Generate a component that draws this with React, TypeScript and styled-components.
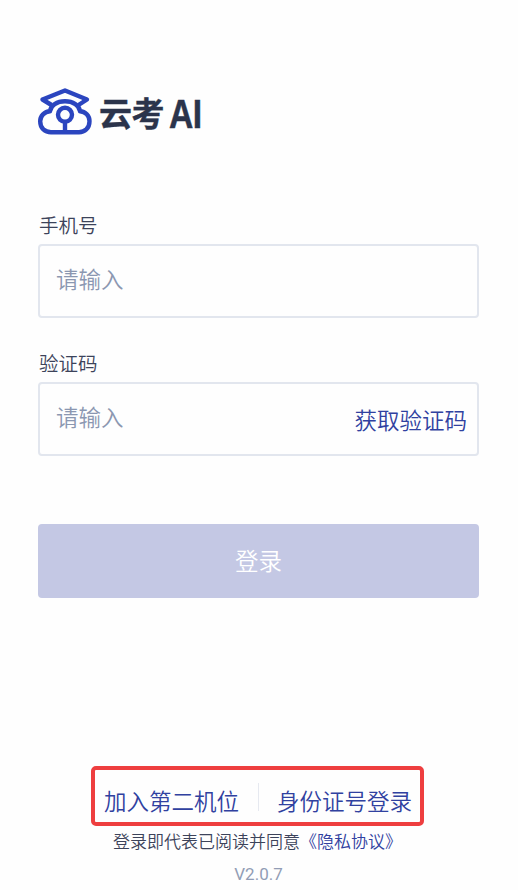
import React from "react";
import styled, { createGlobalStyle } from "styled-components";

const GlobalStyle = createGlobalStyle`
  * { box-sizing: border-box; }
  body { margin: 0; background: #fefefe; }
  button, input { font: inherit; }
`;

const Page = styled.main`
  width: 518px;
  height: 890px;
  padding: 87px 39px 0 38px;
  display: flex;
  flex-direction: column;
  overflow: hidden;
  background: #fefefe;
  color: #3c435a;
  font-family: Roboto, "Noto Sans CJK SC", sans-serif;
  font-weight: 350;
`;

const Brand = styled.header`
  display: flex;
  align-items: center;
  height: 50px;
  margin-bottom: 75px;
  color: #2b344b;
  white-space: nowrap;
`;

const BrandName = styled.span`
  margin-left: 7px;
  font: 700 33px/50px "Noto Sans CJK SC", sans-serif;
  letter-spacing: -0.5px;
  -webkit-text-stroke: 0.4px #2b344b;
`;

const BrandSuffix = styled.span`
  margin-left: 5px;
  font: 700 41px/50px "Liberation Sans", sans-serif;
  letter-spacing: -0.5px;
  -webkit-text-stroke: 0.5px #2b344b;
  transform: translateY(2px) scaleX(0.82);
  transform-origin: left;
`;

const Field = styled.label`
  display: block;
  height: 138px;
`;

const FieldLabel = styled.span`
  display: block;
  height: 32px;
  padding-left: 1px;
  font-size: 19.5px;
  line-height: 29px;
`;

const InputBox = styled.span`
  display: flex;
  align-items: center;
  height: 74px;
  padding: 0 10px 0 16px;
  border: 2px solid #e2e6ee;
  border-radius: 4px;
`;

const Input = styled.input`
  flex: 1;
  min-width: 0;
  height: 40px;
  padding: 0 0 2px;
  border: 0;
  outline: 0;
  background: none;
  font-size: 22.5px;
  &::placeholder { color: #8b97b1; opacity: 1; }
`;

const TextButton = styled.button`
  padding: 3px 0 0;
  border: 0;
  background: none;
  color: #3041a0;
  font-size: 22.5px;
  line-height: 34px;
  white-space: nowrap;
`;

const Submit = styled.button`
  flex: none;
  height: 74px;
  margin-top: 36px;
  padding: 0 0 2px;
  border: 0;
  border-radius: 4px;
  background: #c4c8e4;
  color: #fff;
  font-size: 23.5px;
`;

const Alternatives = styled.nav`
  flex: none;
  display: flex;
  align-items: center;
  justify-content: space-between;
  width: 333px;
  height: 60px;
  margin: 168px 0 0 53px;
  padding: 8px 8px 0 9px;
  border: 4px solid #ee3e3f;
  border-radius: 5px;
`;

const Divider = styled.i`
  width: 1px;
  height: 28px;
  margin-bottom: 6px;
  background: #e6e9f0;
`;

const Agreement = styled.p`
  margin: 1px 0 0 -2px;
  text-align: center;
  font-size: 17px;
  line-height: 30px;
  white-space: nowrap;
`;

const Policy = styled.span`
  color: #3041a0;
`;

const Version = styled.footer`
  margin-top: 5px;
  text-align: center;
  color: #929db5;
  font-size: 17px;
  font-weight: 400;
  line-height: 24px;
`;

function CloudLogo() {
  return (
    <svg width="54" height="48" viewBox="0 0 54 48" fill="none" stroke="#2b45bf" strokeWidth="4.4" strokeLinejoin="round">
      <path d="M13.5 17L4.5 11.5L27 2.5L49 11.5L40.5 17" />
      <path d="M12 23.2C12.5 17.5 19 13.3 27 13.3S41.5 17.5 42 23.2C47.5 23.5 51.5 28 51.5 33.2C51.5 40.5 46.5 44.2 41 44.2H13C7 44.2 2.2 40.5 2.2 33.2C2.2 28 6.5 23.5 12 23.2Z" />
      <circle cx="27" cy="26.8" r="7" />
      <path d="M27 34V44" />
    </svg>
  );
}

export default function App() {
  return (
    <>
      <GlobalStyle />
      <Page>
        <Brand>
          <CloudLogo />
          <BrandName>云考</BrandName>
          <BrandSuffix>AI</BrandSuffix>
        </Brand>
        <Field>
          <FieldLabel>手机号</FieldLabel>
          <InputBox><Input placeholder="请输入" /></InputBox>
        </Field>
        <Field>
          <FieldLabel>验证码</FieldLabel>
          <InputBox>
            <Input placeholder="请输入" />
            <TextButton type="button">获取验证码</TextButton>
          </InputBox>
        </Field>
        <Submit type="button">登录</Submit>
        <Alternatives>
          <TextButton type="button">加入第二机位</TextButton>
          <Divider />
          <TextButton type="button">身份证号登录</TextButton>
        </Alternatives>
        <Agreement>登录即代表已阅读并同意<Policy>《隐私协议》</Policy></Agreement>
        <Version>V2.0.7</Version>
      </Page>
    </>
  );
}
